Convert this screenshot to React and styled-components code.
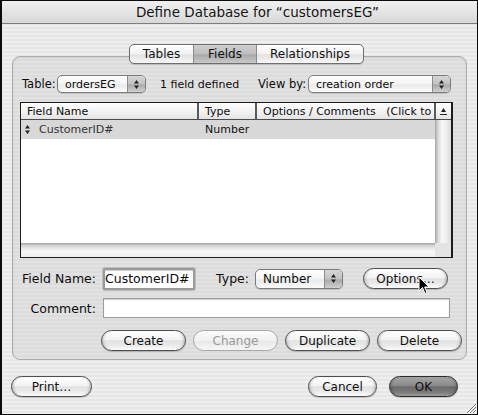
import React from "react";
import styled, { createGlobalStyle } from "styled-components";

const GlobalStyle = createGlobalStyle`
  html, body {
    margin: 0;
    padding: 0;
  }
  body {
    width: 478px;
    height: 415px;
    overflow: hidden;
    font-family: "DejaVu Sans", "Liberation Sans", sans-serif;
    font-size: 11px;
    color: #0c0c0c;
    background: #e9e9e9;
  }
`;

// WINDOW FRAME
const Window = styled.div`
  position: relative;
  width: 478px;
  height: 415px;
  box-sizing: border-box;
  border: 1px solid #0b0b0b;
  border-left-width: 2px;
  background: repeating-linear-gradient(#efefef 0 2px, #e6e6e6 2px 4px);
  display: flex;
  flex-direction: column;
`;

const TitleBar = styled.div`
  flex: none;
  height: 22px;
  display: flex;
  align-items: center;
  justify-content: center;
  padding-left: 36px;
  font-size: 13.5px;
  color: #151515;
  background: linear-gradient(#f0f0f0, #d8d8d8);
  border-bottom: 1px solid #7d7d7d;
`;

const Body = styled.div`
  flex: 1;
  display: flex;
  flex-direction: column;
  padding: 0 10px;
`;

// TABS
const Tabs = styled.div`
  position: relative;
  z-index: 1;
  align-self: flex-start;
  margin: 20px 0 0 117px;
  height: 20px;
  display: flex;
  box-sizing: border-box;
  border: 1px solid #6f6f6f;
  border-radius: 5px;
  overflow: hidden;
  background: linear-gradient(#ffffff, #f1f1f1 50%, #e2e2e2 55%, #f7f7f7);
  box-shadow: 0 1px 1px rgba(0, 0, 0, 0.15);
`;

const Tab = styled.div`
  width: ${(p) => p.w}px;
  display: flex;
  align-items: center;
  justify-content: center;
  font-size: 12px;
  color: #111;
  border-left: ${(p) => (p.first ? "none" : "1px solid #8a8a8a")};
  background: ${(p) =>
    p.active
      ? "linear-gradient(#cfcfcf, #bdbdbd 50%, #a9a9a9 55%, #c9c9c9)"
      : "transparent"};
`;

// GROUP BOX
const Group = styled.div`
  margin-top: -8px;
  height: 304px;
  box-sizing: border-box;
  border: 1px solid #ababab;
  border-radius: 8px;
  background: repeating-linear-gradient(#e2e2e2 0 2px, #dcdcdc 2px 4px);
  box-shadow: inset 0 1px 2px rgba(0, 0, 0, 0.08);
  padding: 18px 13px 0 7px;
  display: flex;
  flex-direction: column;
`;

const TopRow = styled.div`
  height: 18px;
  display: flex;
  align-items: center;
  padding-left: 2px;
`;

const Label = styled.span`
  flex: none;
  width: ${(p) => p.w}px;
  margin-left: ${(p) => p.ml || 0}px;
  text-align: ${(p) => p.align || "left"};
  font-size: ${(p) => p.size || 12.5}px;
  white-space: nowrap;
`;

// POPUP MENU
const Popup = styled.div`
  flex: none;
  width: ${(p) => p.w}px;
  height: ${(p) => p.h || 18}px;
  box-sizing: border-box;
  margin-left: ${(p) => p.ml || 0}px;
  display: flex;
  border: 1px solid #7c7c7c;
  border-radius: 5px;
  overflow: hidden;
  background: linear-gradient(#ffffff, #f4f4f4 50%, #e9e9e9 55%, #fbfbfb);
  box-shadow: 0 1px 1px rgba(0, 0, 0, 0.15);
`;

const PopupText = styled.span`
  flex: 1;
  display: flex;
  align-items: center;
  padding-left: 7px;
  font-size: ${(p) => p.size || 11}px;
  white-space: nowrap;
`;

const PopupArrows = styled.span`
  flex: none;
  width: 17px;
  display: flex;
  align-items: center;
  justify-content: center;
  border-left: 1px solid #8c8c8c;
  background: linear-gradient(#d6d6d6, #c2c2c2 50%, #aaaaaa 55%, #cfcfcf);
`;

const UpDown = () => (
  <svg width="5" height="9" viewBox="0 0 5 9">
    <path d="M2.5 0 L5 3.5 L0 3.5 Z M0 5.5 L5 5.5 L2.5 9 Z" fill="#222" />
  </svg>
);

// LIST
const List = styled.div`
  margin-top: 9px;
  width: 433px;
  height: 156px;
  box-sizing: border-box;
  border: 1px solid #1c1c1c;
  border-right-width: 2px;
  display: flex;
  flex-direction: column;
  background: #fff;
`;

const Header = styled.div`
  flex: none;
  height: 16px;
  display: grid;
  grid-template-columns: 178px 58px 179px 1fr;
  background: linear-gradient(#ffffff, #f3f3f3 50%, #e3e3e3);
  border-bottom: 1px solid #4b4b4b;
`;

const HeadCell = styled.div`
  display: flex;
  align-items: center;
  justify-content: ${(p) => (p.center ? "center" : "flex-start")};
  padding-left: ${(p) => (p.center ? 0 : 6)}px;
  font-size: 11px;
  overflow: hidden;
  white-space: nowrap;
  border-right: ${(p) => (p.last ? "none" : "2px solid #5a5a5a")};
`;

const ListMain = styled.div`
  flex: 1;
  display: flex;
`;

const Rows = styled.div`
  flex: 1;
  background: #fff;
`;

const Row = styled.div`
  height: 19px;
  display: grid;
  grid-template-columns: 178px 58px 1fr;
  align-items: center;
  background: ${(p) => (p.selected ? "#d8d8d8" : "#fff")};
`;

const Cell = styled.div`
  display: flex;
  align-items: center;
  gap: 9px;
  padding-left: ${(p) => p.pl || 6}px;
  font-size: 11px;
  white-space: nowrap;
  color: ${(p) => p.color || "#111"};
`;

const VScroll = styled.div`
  flex: none;
  width: 16px;
  background: linear-gradient(
    to right,
    #a3a3a3 0,
    #d8d8d8 3px,
    #f9f9f9 7px,
    #ededed 12px,
    #d9d9d9 16px
  );
`;

const HScrollRow = styled.div`
  flex: none;
  height: 14px;
  display: flex;
`;

const HScroll = styled.div`
  flex: 1;
  background: linear-gradient(#a3a3a3 0, #d8d8d8 3px, #f7f7f7 8px, #efefef);
`;

const Corner = styled.div`
  flex: none;
  width: 16px;
  background: #e4e4e4;
`;

// FIELD FORM
const FormRow = styled.div`
  margin-top: ${(p) => p.mt}px;
  height: ${(p) => p.h}px;
  display: flex;
  align-items: center;
`;

const TextField = styled.div`
  flex: none;
  width: ${(p) => p.w}px;
  height: ${(p) => p.h}px;
  box-sizing: border-box;
  margin-left: ${(p) => p.ml || 0}px;
  display: flex;
  align-items: center;
  padding-left: ${(p) => (p.focus ? 0 : 4)}px;
  font-size: 12.5px;
  background: #fff;
  border: ${(p) => (p.focus ? "2px solid #9a9a9a" : "1px solid #9c9c9c")};
  border-radius: ${(p) => (p.focus ? 2 : 0)}px;
  box-shadow: ${(p) =>
    p.focus
      ? "0 0 0 1px #bdbdbd, inset 0 1px 1px rgba(0,0,0,0.2)"
      : "inset 0 1px 1px rgba(0,0,0,0.2)"};
  white-space: nowrap;
  overflow: hidden;
`;

// PUSH BUTTONS
const Button = styled.div`
  flex: none;
  width: ${(p) => p.w}px;
  height: 21px;
  box-sizing: border-box;
  margin-left: ${(p) => p.ml || 0}px;
  display: flex;
  align-items: center;
  justify-content: center;
  font-size: 12px;
  color: ${(p) => (p.disabled ? "#9a9a9a" : "#111")};
  border: 1px solid
    ${(p) => (p.disabled ? "#a8a8a8" : p.primary ? "#2c2c2c" : "#4e4e4e")};
  border-radius: 11px;
  background: ${(p) =>
    p.primary
      ? "linear-gradient(#a5a5a5, #8a8a8a 45%, #6b6b6b 52%, #7a7a7a 80%, #9c9c9c)"
      : p.disabled
      ? "linear-gradient(#fbfbfb, #f1f1f1 50%, #e8e8e8 55%, #f6f6f6)"
      : "linear-gradient(#ffffff, #f3f3f3 45%, #e1e1e1 52%, #ececec 80%, #fdfdfd)"};
  box-shadow: ${(p) =>
    p.disabled
      ? "none"
      : "inset 3px 0 3px -2px rgba(0,0,0,0.25), inset -3px 0 3px -2px rgba(0,0,0,0.25), 0 1px 1px rgba(0,0,0,0.2)"};
`;

const ButtonRow = styled.div`
  margin-top: ${(p) => p.mt}px;
  display: flex;
  align-items: center;
  padding-left: ${(p) => p.pl || 0}px;
  padding-right: ${(p) => p.pr || 0}px;
  gap: ${(p) => p.gap || 0}px;
`;

const Spacer = styled.div`
  flex: 1;
`;

// OVERLAYS
const Cursor = styled.svg`
  position: absolute;
  left: 416px;
  top: 275px;
`;

const Grip = styled.svg`
  position: absolute;
  right: 0;
  bottom: 0;
`;

const SortIcon = () => (
  <svg width="9" height="9" viewBox="0 0 9 9">
    <path d="M4.5 1 L7 5 L2 5 Z" fill="#222" />
    <rect x="1" y="7" width="7" height="1" fill="#222" />
  </svg>
);

export default function App() {
  return (
    <>
      <GlobalStyle />
      <Window>
        <TitleBar>Define Database for “customersEG”</TitleBar>
        <Body>
          <Tabs>
            <Tab w={63} first>
              Tables
            </Tab>
            <Tab w={62} active>
              Fields
            </Tab>
            <Tab w={106}>Relationships</Tab>
          </Tabs>

          <Group>
            <TopRow>
              <Label w={35} size={11.5}>
                Table:
              </Label>
              <Popup w={89}>
                <PopupText>ordersEG</PopupText>
                <PopupArrows>
                  <UpDown />
                </PopupArrows>
              </Popup>
              <Label w={98} ml={14} size={11}>
                1 field defined
              </Label>
              <Label w={50} size={11.5}>
                View by:
              </Label>
              <Popup w={143}>
                <PopupText>creation order</PopupText>
                <PopupArrows>
                  <UpDown />
                </PopupArrows>
              </Popup>
            </TopRow>

            <List>
              <Header>
                <HeadCell>Field Name</HeadCell>
                <HeadCell>Type</HeadCell>
                <HeadCell>Options / Comments&nbsp;&nbsp;&nbsp;(Click to sort)</HeadCell>
                <HeadCell center last>
                  <SortIcon />
                </HeadCell>
              </Header>
              <ListMain>
                <Rows>
                  <Row selected>
                    <Cell pl={4}>
                      <UpDown />
                      <span style={{ color: "#333" }}>CustomerID#</span>
                    </Cell>
                    <Cell>Number</Cell>
                    <Cell />
                  </Row>
                </Rows>
                <VScroll />
              </ListMain>
              <HScrollRow>
                <HScroll />
                <Corner />
              </HScrollRow>
            </List>

            <FormRow mt={9} h={23}>
              <Label w={76} align="right">
                Field Name:
              </Label>
              <TextField w={92} h={22} ml={7} focus>
                CustomerID#
              </TextField>
              <Label w={40} ml={14} align="right">
                Type:
              </Label>
              <Popup w={88} h={20} ml={6}>
                <PopupText size={12}>Number</PopupText>
                <PopupArrows>
                  <UpDown />
                </PopupArrows>
              </Popup>
              <Button w={85} ml={20}>
                Options…
              </Button>
            </FormRow>

            <FormRow mt={8} h={20}>
              <Label w={76} align="right">
                Comment:
              </Label>
              <TextField w={347} h={20} ml={7} />
            </FormRow>

            <ButtonRow mt={12} pl={81} gap={7}>
              <Button w={85}>Create</Button>
              <Button w={85} disabled>
                Change
              </Button>
              <Button w={85}>Duplicate</Button>
              <Button w={85}>Delete</Button>
            </ButtonRow>
          </Group>

          <ButtonRow mt={16} pr={9}>
            <Button w={81} ml={-1}>
              Print…
            </Button>
            <Spacer />
            <Button w={69}>Cancel</Button>
            <Button w={69} ml={12} primary>
              OK
            </Button>
          </ButtonRow>
        </Body>

        <Cursor width="13" height="20" viewBox="0 0 13 20">
          <path
            d="M1 1 L1 15 L4.5 11.5 L7 17.5 L9 16.6 L6.6 11 L11 11 Z"
            fill="#000"
            stroke="#fff"
            strokeWidth="1"
          />
        </Cursor>
        <Grip width="12" height="12" viewBox="0 0 12 12">
          <path
            d="M11 2 L2 11 M11 5 L5 11 M11 8 L8 11"
            stroke="#777"
            strokeWidth="1"
          />
          <path
            d="M11.5 3 L3 11.5 M11.5 6 L6 11.5 M11.5 9 L9 11.5"
            stroke="#fff"
            strokeWidth="1"
          />
        </Grip>
      </Window>
    </>
  );
}
